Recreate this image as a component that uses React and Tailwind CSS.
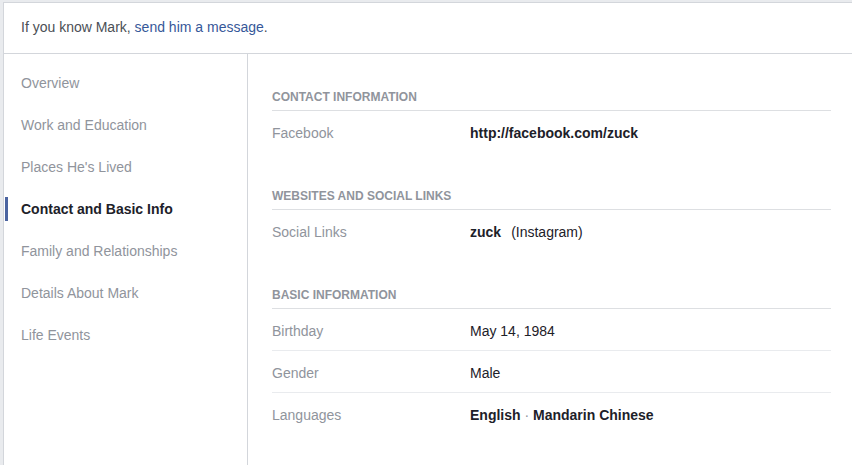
import React from "react";

const navItems = [
  "Overview",
  "Work and Education",
  "Places He's Lived",
  "Contact and Basic Info",
  "Family and Relationships",
  "Details About Mark",
  "Life Events",
];

function SectionHeader({ children }) {
  return (
    <div className="text-[12px] leading-[16px] font-bold text-[#90949c] pb-[5px] border-b border-[#dddfe2]">
      {children}
    </div>
  );
}

function Row({ label, children, last }) {
  return (
    <div
      className={
        "flex pt-[13px] pb-[10px] text-[14px] leading-[18px] " +
        (last ? "" : "border-b border-[#e9ebee]")
      }
    >
      <div className="w-[198px] shrink-0 text-[#90949c]">{label}</div>
      <div className="text-[#1d2129]">{children}</div>
    </div>
  );
}

export default function App() {
  return (
    <div
      className="h-[465px] w-[852px] overflow-hidden bg-[#e9ebee] pt-[2px] pl-[3px]"
      style={{ fontFamily: '"Liberation Sans", Arial, sans-serif' }}
    >
      <div className="h-full flex flex-col bg-white border-l border-t border-[#d3d6db]">
        <div className="pl-[17px] pt-[15px] pb-[17px] text-[14px] leading-[18px] text-[#4b4f56] border-b border-[#d3d6db]">
          If you know Mark, <span className="text-[#365899]">send him a message</span>.
        </div>
        <div className="flex-1 flex">
          <div className="w-[244px] shrink-0 border-r border-[#d3d6db] pt-[17px]">
            {navItems.map((item, i) => {
              const active = item === "Contact and Basic Info";
              return (
                <div key={i} className="flex items-center h-[24px] mb-[18px]">
                  <div
                    className={
                      "w-[3px] h-[24px] ml-[1px] " +
                      (active ? "bg-[#4b64a0]" : "bg-transparent")
                    }
                  />
                  <div
                    className={
                      "ml-[13px] text-[14px] leading-[18px] " +
                      (active ? "font-bold text-[#1d2129]" : "text-[#90949c]")
                    }
                  >
                    {item}
                  </div>
                </div>
              );
            })}
          </div>
          <div className="flex-1 pl-[24px] pr-[21px]">
            <div className="pt-[35px]">
              <SectionHeader>CONTACT INFORMATION</SectionHeader>
              <Row label="Facebook" last>
                <span className="font-bold">http://facebook.com/zuck</span>
              </Row>
            </div>
            <div className="pt-[36px]">
              <SectionHeader>WEBSITES AND SOCIAL LINKS</SectionHeader>
              <Row label="Social Links" last>
                <span className="font-bold">zuck</span>
                <span className="ml-[10px]">(Instagram)</span>
              </Row>
            </div>
            <div className="pt-[36px]">
              <SectionHeader>BASIC INFORMATION</SectionHeader>
              <Row label="Birthday">May 14, 1984</Row>
              <Row label="Gender">Male</Row>
              <Row label="Languages" last>
                <span className="font-bold">English</span>
                <span className="text-[#90949c]"> · </span>
                <span className="font-bold">Mandarin Chinese</span>
              </Row>
            </div>
          </div>
        </div>
      </div>
    </div>
  );
}
